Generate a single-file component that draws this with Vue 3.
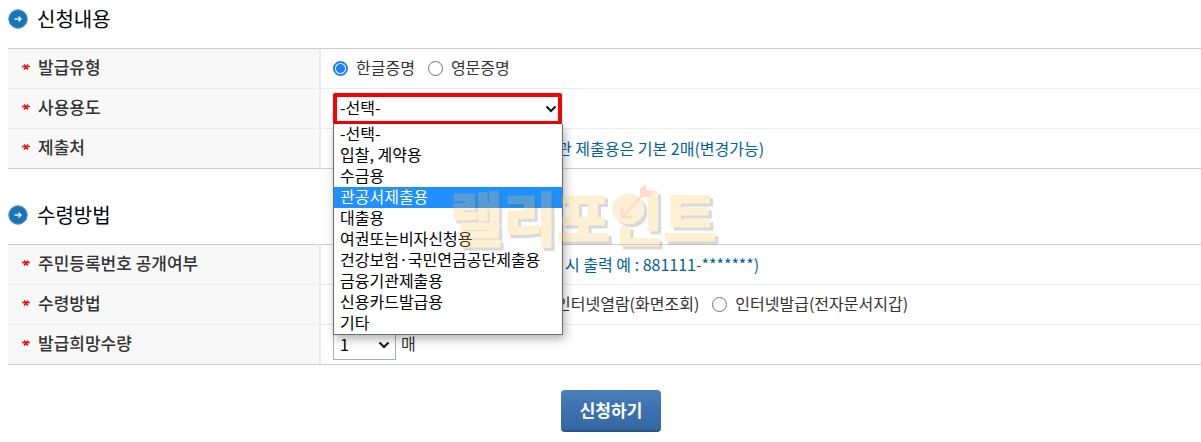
<script setup>
import { ref } from 'vue'

const language = ref('ko')
const receipt = ref('')
const purpose = ref('-선택-')
const quantity = ref('1')
const highlighted = '관공서제출용'
const purposes = [
  '-선택-',
  '입찰, 계약용',
  '수금용',
  '관공서제출용',
  '대출용',
  '여권또는비자신청용',
  '건강보험·국민연금공단제출용',
  '금융기관제출용',
  '신용카드발급용',
  '기타',
]
</script>

<template>
  <form class="page" @submit.prevent>
    <section class="section">
      <h2 class="heading">
        <svg class="bullet" viewBox="0 0 20 20" aria-hidden="true">
          <circle cx="10" cy="10" r="9.3" fill="#1776b8" stroke="#6d95bb" />
          <path d="M6.500 10h6M10.500 7.500 13 10l-2.500 2.500" fill="none" stroke="#e8f2fa" stroke-width="1.400" />
        </svg>
        신청내용
      </h2>
      <table class="grid">
        <tbody>
          <tr>
            <th scope="row"><span class="label"><svg class="star" viewBox="0 0 8 6" aria-hidden="true"><path d="M0 2.500h8M2 0.500l4 5M6 0.500l-4 5" /></svg>발급유형</span></th>
            <td>
              <div class="cell">
                <label class="choice"><input v-model="language" type="radio" name="language" value="ko" />한글증명</label>
                <label class="choice"><input v-model="language" type="radio" name="language" value="en" />영문증명</label>
              </div>
            </td>
          </tr>
          <tr>
            <th scope="row"><label class="label" for="purpose"><svg class="star" viewBox="0 0 8 6" aria-hidden="true"><path d="M0 2.500h8M2 0.500l4 5M6 0.500l-4 5" /></svg>사용용도</label></th>
            <td>
              <div class="cell">
                <div class="dropdown">
                  <select id="purpose" v-model="purpose" class="purpose">
                    <option v-for="item in purposes" :key="item">{{ item }}</option>
                  </select>
                  <svg class="chevron" viewBox="0 0 12 8" aria-hidden="true"><path d="M1.500 1.500 6 6l4.500-4.500" /></svg>
                  <ul class="menu" role="listbox" aria-label="사용용도">
                    <li v-for="item in purposes" :key="item" role="option" :aria-selected="item === highlighted" :class="{ active: item === highlighted }">{{ item }}</li>
                  </ul>
                </div>
              </div>
            </td>
          </tr>
          <tr>
            <th scope="row"><label class="label" for="target"><svg class="star" viewBox="0 0 8 6" aria-hidden="true"><path d="M0 2.500h8M2 0.500l4 5M6 0.500l-4 5" /></svg>제출처</label></th>
            <td>
              <div class="cell note"><input id="target" class="target" type="text" />관 제출용은 기본 2매(변경가능)</div>
            </td>
          </tr>
        </tbody>
      </table>
    </section>

    <section class="section">
      <h2 class="heading">
        <svg class="bullet" viewBox="0 0 20 20" aria-hidden="true">
          <circle cx="10" cy="10" r="9.3" fill="#1776b8" stroke="#6d95bb" />
          <path d="M6.500 10h6M10.500 7.500 13 10l-2.500 2.500" fill="none" stroke="#e8f2fa" stroke-width="1.400" />
        </svg>
        수령방법
      </h2>
      <table class="grid">
        <tbody>
          <tr>
            <th scope="row"><span class="label"><svg class="star" viewBox="0 0 8 6" aria-hidden="true"><path d="M0 2.500h8M2 0.500l4 5M6 0.500l-4 5" /></svg>주민등록번호 공개여부</span></th>
            <td><div class="cell note indent">시 출력 예 : 881111-*******)</div></td>
          </tr>
          <tr>
            <th scope="row"><span class="label"><svg class="star" viewBox="0 0 8 6" aria-hidden="true"><path d="M0 2.500h8M2 0.500l4 5M6 0.500l-4 5" /></svg>수령방법</span></th>
            <td>
              <div class="cell methods">
                <label class="choice"><input v-model="receipt" type="radio" name="receipt" value="view" />인터넷열람(화면조회)</label>
                <label class="choice"><input v-model="receipt" type="radio" name="receipt" value="issue" />인터넷발급(전자문서지갑)</label>
              </div>
            </td>
          </tr>
          <tr>
            <th scope="row"><label class="label" for="quantity"><svg class="star" viewBox="0 0 8 6" aria-hidden="true"><path d="M0 2.500h8M2 0.500l4 5M6 0.500l-4 5" /></svg>발급희망수량</label></th>
            <td>
              <div class="cell">
                <div class="amount">
                  <select id="quantity" v-model="quantity" class="quantity">
                    <option>1</option>
                    <option>2</option>
                  </select>
                  <svg class="chevron" viewBox="0 0 12 8" aria-hidden="true"><path d="M1.500 1.500 6 6l4.500-4.500" /></svg>
                </div>
                <span class="unit">매</span>
              </div>
            </td>
          </tr>
        </tbody>
      </table>
    </section>

    <div class="actions"><button type="submit" class="submit">신청하기</button></div>

    <svg class="watermark" viewBox="0 0 280 76" aria-hidden="true">
      <g class="brand">
        <text x="1" y="58">랠리포인트</text>
        <circle cx="180" cy="26" r="15" />
      </g>
      <g fill="none" stroke="#f57c2c" stroke-width="3">
        <path d="M174 33 194 12M173 25v9h10" />
        <path d="M191 14v-8l5-5 2 6 8 1-5 6z" fill="#f57c2c" stroke="none" />
      </g>
    </svg>
  </form>
</template>

<style>
body {
  margin: 0;
  background: #fff;
}
</style>

<style scoped>
.page {
  position: relative;
  padding-left: 8px;
  font: 16px/20px "Noto Sans CJK KR", sans-serif;
  color: #333;
}
.section {
  margin-bottom: 27px;
}
.heading {
  display: flex;
  align-items: center;
  gap: 9px;
  height: 38px;
  margin: 0 0 10px;
  font-size: 20px;
  font-weight: 400;
  color: #000;
}
.bullet {
  width: 20px;
  height: 20px;
}
.grid {
  width: 100%;
  table-layout: fixed;
  border-spacing: 0;
  border-top: 1px solid #ccc;
}
.grid th,
.grid td {
  box-sizing: border-box;
  height: 40px;
  padding: 0;
  border-bottom: 1px solid #ebebeb;
  text-align: left;
}
.grid th {
  width: 313px;
  border-right: 2px solid #ebebeb;
  background: #f8f8f8;
}
.grid tr:last-child th,
.grid tr:last-child td {
  border-bottom-color: #ccc;
}
.label {
  display: flex;
  align-items: center;
  gap: 8px;
  padding: 0 0 3px 14px;
  font-size: 17px;
  font-weight: 500;
}
.star {
  width: 8px;
  height: 6px;
  fill: none;
  stroke: #e01919;
  stroke-width: 1.5;
}
.cell {
  display: flex;
  align-items: center;
  padding-left: 12px;
}
.choice {
  display: flex;
  align-items: center;
  gap: 8px;
  margin-right: 13px;
  padding-bottom: 3px;
}
.choice input {
  appearance: none;
  box-sizing: border-box;
  width: 15px;
  height: 15px;
  margin: 2px 0 0;
  border: 1px solid #767676;
  border-radius: 50%;
  background: #fff;
}
.choice input:checked {
  border: 2px solid #1a80f5;
  background: radial-gradient(circle, #1a80f5 4px, #fff 5px);
}
.note {
  padding-bottom: 2px;
  color: #00629e;
}
.target {
  box-sizing: border-box;
  width: 222px;
  height: 26px;
  margin-right: 2px;
  border: 1px solid #aab4b8;
}
.indent {
  padding-left: 244px;
}
.methods {
  padding-left: 212px;
}
.dropdown,
.amount {
  position: relative;
}
.dropdown {
  width: 230px;
}
.purpose,
.quantity {
  display: block;
  appearance: none;
  box-sizing: border-box;
  font: inherit;
  color: #000;
  background: #fff;
}
.purpose {
  width: 229px;
  height: 32px;
  padding: 0 3px 4px;
  border: 4px solid #f80000;
  border-radius: 2px;
}
.quantity {
  width: 63px;
  height: 31px;
  padding: 0 6px 2px;
  border: 1px solid #a5b0b5;
}
.amount {
  margin-right: 5px;
}
.unit {
  padding-bottom: 3px;
}
.chevron {
  position: absolute;
  top: 12px;
  right: 6px;
  width: 12px;
  height: 8px;
  fill: none;
  stroke: #111;
  stroke-width: 2;
  pointer-events: none;
}
.menu {
  position: absolute;
  z-index: 1;
  top: 31px;
  left: 0;
  box-sizing: border-box;
  width: 230px;
  margin: 0;
  padding: 0;
  border: 1px solid #666e72;
  border-top: 0;
  background: #fff;
  box-shadow: 2px 4px 9px rgba(0, 0, 0, 0.3);
  color: #000;
  line-height: 19px;
  list-style: none;
}
.menu li {
  padding: 0 0 2px 6px;
}
.menu .active {
  background: #1e90ff;
  color: #fff;
}
.actions {
  display: flex;
  justify-content: center;
  margin-top: -2px;
  padding-left: 13px;
}
.submit {
  width: 100px;
  height: 42px;
  padding: 0;
  border: 0;
  border-bottom: 2px solid #275682;
  border-radius: 4px;
  background: linear-gradient(#4b7fb9, #3d74b3 40%, #3568a2);
  color: #fff;
  font: 700 17px/20px "Noto Sans CJK KR", sans-serif;
}
.watermark {
  position: absolute;
  z-index: 2;
  top: 183px;
  left: 449px;
  width: 280px;
  height: 76px;
  overflow: visible;
  opacity: 0.25;
  pointer-events: none;
}
.brand {
  fill: #ffc354;
  stroke: #ffc354;
  stroke-width: 1;
  stroke-linejoin: round;
  font: 900 58px "Noto Sans CJK KR", sans-serif;
  filter: drop-shadow(3px 3px 0 #646e70);
}
</style>
